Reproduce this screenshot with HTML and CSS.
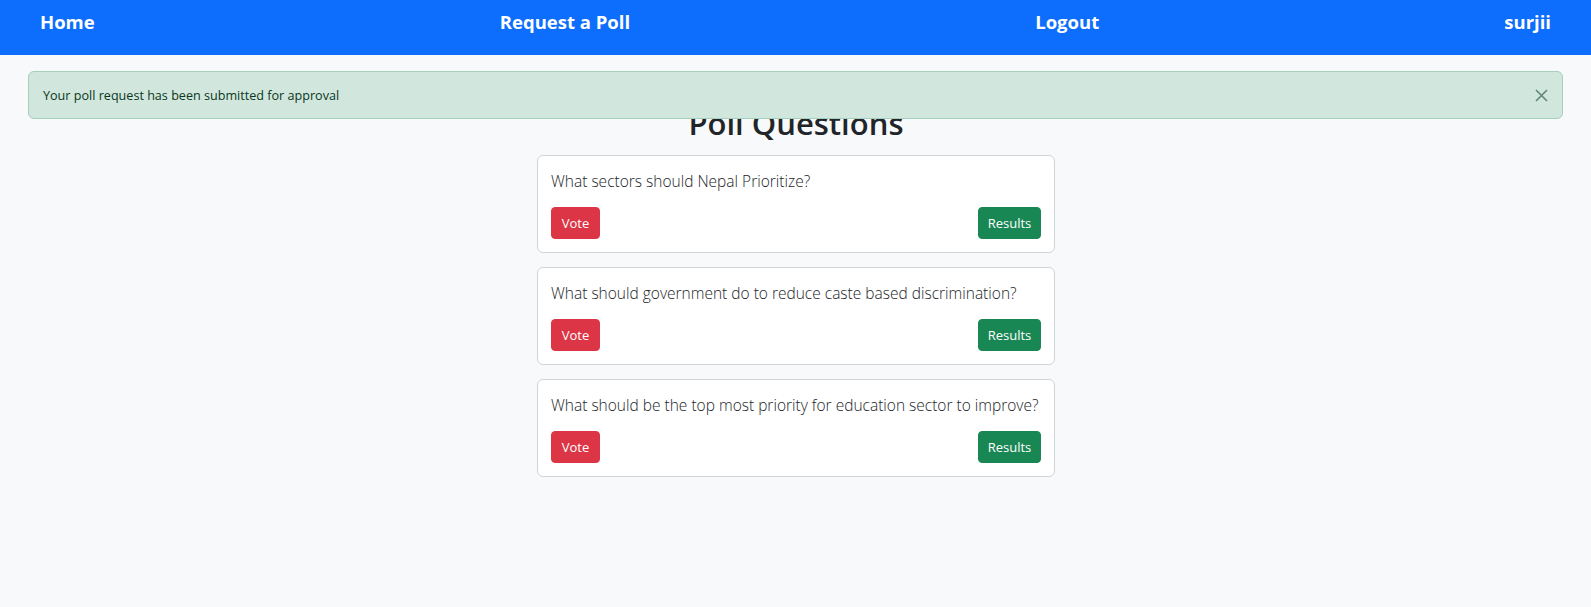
FILE: index.html
```html
<!DOCTYPE html>
<html lang="en">
<head>
<meta charset="utf-8">
<title>Poll Questions</title>
<link rel="stylesheet" href="styles.css">
</head>
<body>
<nav class="navbar">
  <a class="nav-link" href="#">Home</a>
  <a class="nav-link" href="#">Request a Poll</a>
  <a class="nav-link" href="#">Logout</a>
  <span class="nav-link">surjii</span>
</nav>

<div class="alert" role="alert">
  <span class="alert-text">Your poll request has been submitted for approval</span>
  <button class="btn-close" type="button" aria-label="Close">
    <svg width="13" height="13" viewBox="0 0 13 13"><path d="M1 1 L12 12 M12 1 L1 12" stroke="currentColor" stroke-width="1.6" fill="none"/></svg>
  </button>
</div>

<main class="content">
  <h2 class="page-title">Poll Questions</h2>
  <div class="poll-list">
    <div class="card">
      <p class="question">What sectors should Nepal Prioritize?</p>
      <div class="actions">
        <a class="btn btn-vote" href="#">Vote</a>
        <a class="btn btn-results" href="#">Results</a>
      </div>
    </div>
    <div class="card">
      <p class="question">What should government do to reduce caste based discrimination?</p>
      <div class="actions">
        <a class="btn btn-vote" href="#">Vote</a>
        <a class="btn btn-results" href="#">Results</a>
      </div>
    </div>
    <div class="card">
      <p class="question">What should be the top most priority for education sector to improve?</p>
      <div class="actions">
        <a class="btn btn-vote" href="#">Vote</a>
        <a class="btn btn-results" href="#">Results</a>
      </div>
    </div>
  </div>
</main>
</body>
</html>
```

FILE: styles.css
```css
* { box-sizing: border-box; }

html, body {
  margin: 0;
  padding: 0;
}

body {
  background: #f8f9fa;
  color: #212529;
  font-family: "Open Sans", "Noto Sans", sans-serif;
  min-height: 607px;
  position: relative;
}

.navbar {
  height: 55px;
  background: #0d6efd;
  display: flex;
  justify-content: space-between;
  align-items: flex-start;
  padding: 7px 40px 0 40px;
}

.nav-link {
  color: #fff;
  text-decoration: none;
  font-size: 18.5px;
  font-weight: 700;
  line-height: 30px;
}

.alert {
  position: absolute;
  top: 71px;
  left: 28px;
  right: 28px;
  height: 48px;
  background: #d1e7dd;
  border: 1px solid #a3cfbb;
  border-radius: 6px;
  color: #0a3622;
  display: flex;
  align-items: center;
  justify-content: space-between;
  padding: 0 14px 0 14px;
  font-size: 12.6px;
}

.btn-close {
  background: none;
  border: 0;
  padding: 0;
  width: 13px;
  height: 13px;
  color: #0a3622;
  opacity: 0.55;
  display: flex;
}

.content {
  display: flex;
  flex-direction: column;
  align-items: center;
  padding: 49px 0 0 1px;
}

.page-title {
  margin: 0 0 13px 0;
  font-size: 31px;
  font-weight: 600;
  line-height: 38px;
}

.poll-list {
  display: flex;
  flex-direction: column;
  gap: 14px;
  width: 518px;
}

.card {
  background: #fff;
  border: 1px solid #d3d4d5;
  border-radius: 6px;
  padding: 13px;
  height: 98px;
}

.question {
  margin: 0 0 14px 0;
  font-size: 15.5px;
  font-weight: 300;
  line-height: 24px;
  color: #212529;
}

.actions {
  display: flex;
  justify-content: space-between;
}

.btn {
  display: inline-block;
  color: #fff;
  text-decoration: none;
  font-size: 13px;
  line-height: 22px;
  border: 1px solid transparent;
  border-radius: 4px;
  height: 32px;
  text-align: center;
  padding: 4px 0;
}

.btn-vote {
  background: #dc3545;
  border-color: #dc3545;
  width: 49px;
}

.btn-results {
  background: #198754;
  border-color: #198754;
  width: 63px;
}
```
